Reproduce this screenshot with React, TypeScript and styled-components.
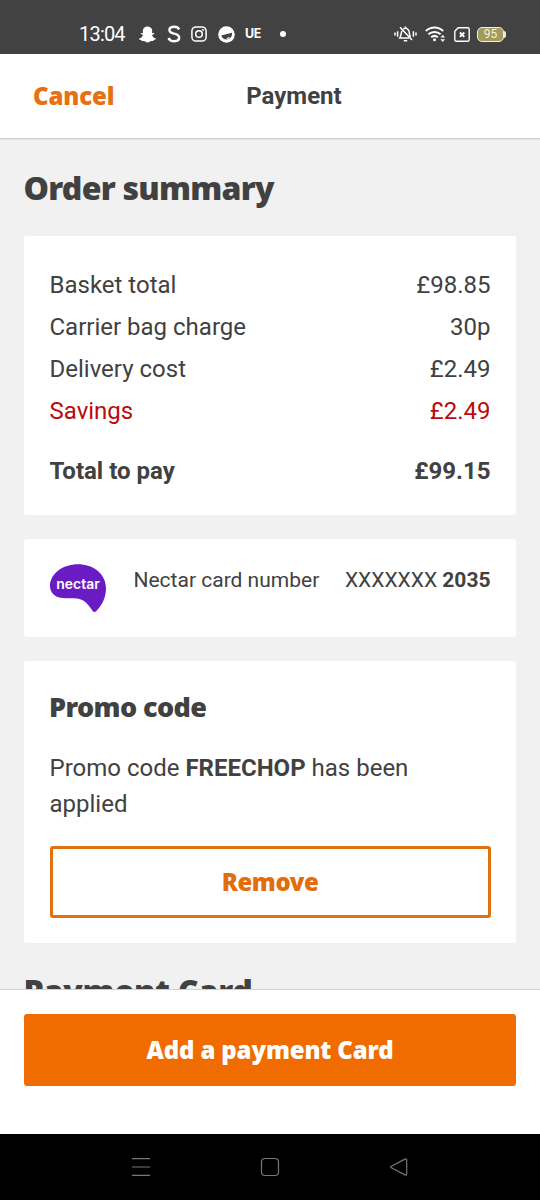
import React from "react";
import styled, { createGlobalStyle } from "styled-components";
import { FaSnapchatGhost } from "react-icons/fa";

const GlobalStyle = createGlobalStyle`
  * { box-sizing: border-box; }
  body { margin: 0; background: #f1f1f1; }
`;

const slab = `"Noto Sans", "Open Sans", sans-serif`;

const Screen = styled.div`
  display: flex;
  flex-direction: column;
  width: 540px;
  height: 1200px;
  overflow: hidden;
  background: #f1f1f1;
  color: #414141;
  font-family: Roboto, sans-serif;
  font-size: 24px;
  line-height: 36px;
`;

const StatusBar = styled.div`
  display: flex;
  flex: none;
  align-items: center;
  height: 54px;
  padding: 14px 34px 0 79px;
  background: #424242;
  color: #fff;
  svg { display: block; flex: none; }
`;

const Clock = styled.span`
  width: 60px;
  font-size: 20px;
  line-height: 24px;
  letter-spacing: -0.8px;
`;

const AppIcons = styled.div`
  display: flex;
  align-items: center;
  gap: 10.5px;
`;

const EatsMark = styled.span`
  width: 17px;
  font: 700 12.5px/16px Inter, sans-serif;
  letter-spacing: -0.4px;
`;

const Dot = styled.span`
  width: 6px;
  height: 6px;
  margin-left: 7px;
  border-radius: 50%;
  background: #fff;
`;

const SystemIcons = styled.div`
  display: flex;
  align-items: center;
  gap: 8.5px;
  margin-left: auto;
`;

const Battery = styled.span`
  display: flex;
  align-items: center;
  margin-left: -1px;
  &::after {
    content: "";
    width: 2px;
    height: 7px;
    border-radius: 0 2px 2px 0;
    background: #ebe8dc;
  }
`;

const BatteryLevel = styled.span`
  width: 27px;
  height: 15px;
  border: 1px solid #f2f0e6;
  border-radius: 5px;
  background: #a39a5c;
  color: #f4f1e2;
  font-size: 12px;
  line-height: 13px;
  text-align: center;
`;

const Header = styled.header`
  display: grid;
  flex: none;
  grid-template-columns: 1fr auto 1fr;
  align-items: center;
  height: 85px;
  padding: 0 0 0 48px;
  border-bottom: 1px solid #d2d2d2;
  box-shadow: 0 1px 1px #e4e4e4;
  background: #fff;
`;

const Cancel = styled.button`
  justify-self: start;
  margin-left: -15px;
  padding: 0;
  border: 0;
  background: none;
  color: #e87010;
  font: 900 24px/36px ${slab};
  letter-spacing: -0.15px;
`;

const Title = styled.h1`
  margin: 0;
  font-size: 24px;
  font-weight: 700;
  line-height: 36px;
`;

const Content = styled.main`
  flex: 1;
  min-height: 0;
  overflow: hidden;
  padding: 25px 24px 0;
`;

const SectionTitle = styled.h2<{ $spacing: string }>`
  height: 48px;
  margin: 0 0 24px -0.5px;
  font: 900 32px/48px ${slab};
  letter-spacing: ${(p) => p.$spacing};
`;

const Card = styled.section<{ $pad: string; $height: number }>`
  height: ${(p) => p.$height}px;
  margin-bottom: 24px;
  padding: ${(p) => p.$pad};
  border-radius: 3px;
  background: #fff;
`;

const CostRow = styled.div<{ $tone?: "saving" | "total" }>`
  display: flex;
  justify-content: space-between;
  margin-bottom: 6px;
  margin-top: ${(p) => (p.$tone === "total" ? "24px" : "0")};
  color: ${(p) => (p.$tone === "saving" ? "#bd0a0a" : "inherit")};
  font-weight: ${(p) => (p.$tone === "total" ? 700 : 400)};
`;

const NectarRow = styled.div`
  display: flex;
  font-size: 21px;
  line-height: 32px;
`;

const NectarLogo = styled.svg`
  flex: none;
  width: 58px;
  height: 50px;
  margin-right: 25.5px;
`;

const CardNumber = styled.span`
  margin-left: auto;
`;

const PromoTitle = styled.h3`
  margin: 0 0 25px -0.5px;
  font: 900 27px/36px ${slab};
  letter-spacing: -0.6px;
`;

const PromoText = styled.p`
  margin: 0 0 24px;
`;

const Button = styled.button<{ $filled?: boolean }>`
  display: block;
  width: 100%;
  height: 72px;
  padding: 0;
  border: 3px solid ${(p) => (p.$filled ? "#f06c00" : "#e07010")};
  border-radius: 3px;
  background: ${(p) => (p.$filled ? "#f06c00" : "#fff")};
  color: ${(p) => (p.$filled ? "#fff" : "#e36d0c")};
  font: 900 24px/36px ${slab};
  letter-spacing: ${(p) => (p.$filled ? "-0.15px" : "-0.45px")};
`;

const Footer = styled.footer`
  flex: none;
  height: 145px;
  padding: 24px 24px 0;
  border-top: 1px solid #d2d2d2;
  background: #fff;
`;

const NavBar = styled.nav`
  display: flex;
  flex: none;
  align-items: center;
  justify-content: space-between;
  height: 66px;
  padding: 0 131px;
  background: #000;
`;

const costs: { label: string; value: string; tone?: "saving" | "total" }[] = [
  { label: "Basket total", value: "£98.85" },
  { label: "Carrier bag charge", value: "30p" },
  { label: "Delivery cost", value: "£2.49" },
  { label: "Savings", value: "£2.49", tone: "saving" },
  { label: "Total to pay", value: "£99.15", tone: "total" },
];

const SkypeIcon = () => (
  <svg width="14" height="18" viewBox="0 0 14 18" fill="none" stroke="#fff" strokeWidth="2.4">
    <path d="M12.2 4.4C11.2 2.5 9.4 1.7 7.2 1.7 4.4 1.7 2.4 3 2.4 5.1c0 2.1 1.8 2.9 4.6 3.5 3.4.7 5.2 1.6 5.2 4 0 2.3-2.1 3.7-5 3.7-2.7 0-4.8-1.1-5.7-3.3" />
  </svg>
);

const InstagramIcon = () => (
  <svg width="16" height="16" viewBox="0 0 16 16" fill="none" stroke="#fff" strokeWidth="1.5">
    <rect x="0.9" y="0.9" width="14.2" height="14.2" rx="4.2" />
    <circle cx="8" cy="8" r="3.3" />
    <circle cx="12" cy="4" r="0.9" fill="#fff" stroke="none" />
  </svg>
);

const SmileIcon = () => (
  <svg width="17" height="17" viewBox="0 0 17 17">
    <circle cx="8.5" cy="8.5" r="8.3" fill="#fff" />
    <path d="M3.2 9.4 14 6.8c.4 3.6-1.500 6.200-4.600 6.600-2.900.3-5.200-1.200-6.200-4z" fill="#424242" />
    <path d="M8.200 13.500c.3-1.500 1.700-2.600 4-2.200-.9 1.300-2.300 2.100-4 2.200z" fill="#fff" />
  </svg>
);

const MutedBellIcon = () => (
  <svg width="23" height="16" viewBox="0 0 23 16" fill="none" stroke="#fff" strokeWidth="1.5">
    <path d="M1 6.500v3M3.600 5.200v5.600M19.400 5.200v5.600M22 6.500v3" />
    <path d="M8 4.800C6.900 6.500 7.500 9 5.800 12h9.600M9.200 3c3.600-1.800 6 .6 6.100 3.800.1 1.500.4 2.700 1.200 4" />
    <path d="M11.500 0.400v2M9.800 14.700h3.400M6 1.300l12 12.600" />
  </svg>
);

const WifiIcon = () => (
  <svg width="20" height="16" viewBox="0 0 20 16" fill="none" stroke="#fff" strokeWidth="2">
    <path d="M.8 5C5.800.3 13.200.3 18.200 5M3.400 8.300c3.500-3.200 8.700-3.200 12.200 0M6.200 11.300c1.900-1.600 4.700-1.600 6.600 0" />
    <circle cx="9.500" cy="13.700" r="1.500" fill="#fff" stroke="none" />
    <path d="m15.400 11.500 2.300-2.700 2.300 2.700zM15.400 13.200l2.300 2.700 2.300-2.700z" fill="#fff" stroke="none" />
  </svg>
);

const NoSimIcon = () => (
  <svg width="16" height="15" viewBox="0 0 16 15" fill="none" stroke="#fff" strokeWidth="1.4">
    <path d="M4.200.8h9.600c.8 0 1.400.6 1.400 1.400v10.600c0 .8-.6 1.400-1.400 1.400H2.200c-.8 0-1.400-.6-1.400-1.400V4.200z" />
    <path d="m5.900 5.500 4.400 4.400m0-4.400L5.900 9.900" strokeWidth="1.8" />
  </svg>
);

export default function App() {
  return (
    <Screen>
      <GlobalStyle />
      <StatusBar>
        <Clock>13:04</Clock>
        <AppIcons>
          <FaSnapchatGhost size={17} />
          <SkypeIcon />
          <InstagramIcon />
          <SmileIcon />
          <EatsMark>UE</EatsMark>
          <Dot />
        </AppIcons>
        <SystemIcons>
          <MutedBellIcon />
          <WifiIcon />
          <NoSimIcon />
          <Battery>
            <BatteryLevel>95</BatteryLevel>
          </Battery>
        </SystemIcons>
      </StatusBar>

      <Header>
        <Cancel>Cancel</Cancel>
        <Title>Payment</Title>
      </Header>

      <Content>
        <SectionTitle $spacing="-0.75px">Order summary</SectionTitle>
        <Card $pad="31px 25.5px 26px" $height={279}>
          {costs.map((c) => (
            <CostRow key={c.label} $tone={c.tone}>
              <span>{c.label}</span>
              <span>{c.value}</span>
            </CostRow>
          ))}
        </Card>

        <Card $pad="25px 25.5px 25px 26px" $height={98}>
          <NectarRow>
            <NectarLogo viewBox="0 0 58 50">
              <path
                d="M28 0.200C43 .2 56 9.500 56 24.500c0 9.500-4.500 17.500-9.800 22.700-1.300 1.200-2.700 1-3.700-.4C37.500 39.500 33.500 34.300 24 34.300H16C6 34.300 0 29.500 0 22 0 9.500 13 .2 28 .2z"
                fill="#6a1cc4"
              />
              <text x="6.300" y="25" fill="#fff" fontFamily="Inter, sans-serif" fontSize="14" fontWeight="600" textLength="43.500" lengthAdjust="spacingAndGlyphs">
                nectar
              </text>
            </NectarLogo>
            <span>Nectar card number</span>
            <CardNumber>
              XXXXXXX <b>2035</b>
            </CardNumber>
          </NectarRow>
        </Card>

        <Card $pad="28px 25.5px 26px" $height={282}>
          <PromoTitle>Promo code</PromoTitle>
          <PromoText>
            Promo code <b>FREECHOP</b> has been applied
          </PromoText>
          <Button>Remove</Button>
        </Card>

        <SectionTitle $spacing="-0.2px">Payment Card</SectionTitle>
      </Content>

      <Footer>
        <Button $filled>Add a payment Card</Button>
      </Footer>

      <NavBar>
        <svg width="20" height="20" viewBox="0 0 20 20" stroke="#777" strokeWidth="1.2">
          <path d="M1 1.600h18M1 10h18M1 18.300h18" />
        </svg>
        <svg width="20" height="20" viewBox="0 0 20 20" fill="none" stroke="#777" strokeWidth="1.2">
          <rect x="1.5" y="1.5" width="17" height="17" rx="3.5" />
        </svg>
        <svg width="20" height="20" viewBox="0 0 20 20" fill="none" stroke="#777" strokeWidth="1.2">
          <path d="M16 2.100 2.300 9.200q-1.200.8 0 1.600L16 17.900q1.700.6 1.700-1.200V3.300q0-1.800-1.700-1.200z" />
        </svg>
      </NavBar>
    </Screen>
  );
}
